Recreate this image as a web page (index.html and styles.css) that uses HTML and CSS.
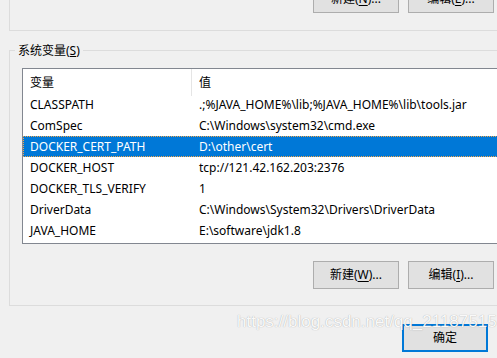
FILE: index.html
```html
<!DOCTYPE html>
<html lang="zh-CN">
<head>
<meta charset="utf-8">
<title>环境变量</title>
<link rel="stylesheet" href="styles.css">
</head>
<body>
<div class="dialog">
  <div class="group-top">
    <div class="btn-row">
      <button class="btn">新建(<u>N</u>)...</button>
      <button class="btn">编辑(<u>E</u>)...</button>
    </div>
  </div>

  <fieldset class="group">
    <legend class="group-label">系统变量(<u>S</u>)</legend>
    <div class="list">
      <div class="list-head">
        <div class="cell">变量</div>
        <div class="cell sep">值</div>
      </div>
      <div class="list-row"><div class="cell">CLASSPATH</div><div class="cell">.;%JAVA_HOME%\lib;%JAVA_HOME%\lib\tools.jar</div></div>
      <div class="list-row"><div class="cell">ComSpec</div><div class="cell">C:\Windows\system32\cmd.exe</div></div>
      <div class="list-row selected"><div class="cell">DOCKER_CERT_PATH</div><div class="cell">D:\other\cert</div></div>
      <div class="list-row"><div class="cell">DOCKER_HOST</div><div class="cell">tcp://121.42.162.203:2376</div></div>
      <div class="list-row"><div class="cell">DOCKER_TLS_VERIFY</div><div class="cell">1</div></div>
      <div class="list-row"><div class="cell">DriverData</div><div class="cell">C:\Windows\System32\Drivers\DriverData</div></div>
      <div class="list-row"><div class="cell">JAVA_HOME</div><div class="cell">E:\software\jdk1.8</div></div>
    </div>
    <div class="btn-row btn-row-bottom">
      <button class="btn">新建(<u>W</u>)...</button>
      <button class="btn">编辑(<u>I</u>)...</button>
    </div>
  </fieldset>

  <div class="footer">
    <button class="btn btn-default">确定</button>
  </div>

  <div class="watermark">https://blog.csdn.net/qq_21187515</div>
</div>
</body>
</html>
```
FILE: styles.css
```css
html, body {
  margin: 0;
  padding: 0;
  width: 497px;
  height: 358px;
  overflow: hidden;
  background: #f0f0f0;
}

.dialog {
  position: relative;
  width: 540px;
  height: 358px;
  font-family: "Noto Sans", "Noto Sans CJK SC", sans-serif;
  font-size: 12px;
  color: #000;
}

.group-top {
  margin: -15px 0 0 9px;
  border-left: 1px solid #dcdcdc;
  border-bottom: 1px solid #dcdcdc;
  padding-bottom: 17px;
}

.btn-row {
  display: flex;
  gap: 9px;
  padding-left: 303px;
}

.btn {
  box-sizing: border-box;
  width: 86px;
  height: 28px;
  margin: 0;
  padding: 0;
  background: #e1e1e1;
  border: 1px solid #adadad;
  border-radius: 0;
  font-family: "Noto Sans", "Noto Sans CJK SC", sans-serif;
  font-size: 12px;
  line-height: 26px;
  color: #000;
}

.btn u {
  text-decoration-thickness: 1px;
  text-underline-offset: 2px;
}

.group {
  margin: 10px 0 0 9px;
  padding: 0 0 16px 0;
  border: 1px solid #dcdcdc;
  min-width: 0;
}

.group-label {
  margin-left: 5px;
  padding: 2px 3px 0;
  line-height: 16px;
  font-size: 12px;
}

.list {
  margin: 9px 0 0 12px;
  border: 1px solid #828790;
  background: #fff;
  padding-bottom: 2px;
}

.list-head,
.list-row {
  display: grid;
  grid-template-columns: 168px 1fr;
}

.list-head {
  height: 25px;
  line-height: 27px;
}

.list-row {
  height: 21px;
  line-height: 21px;
  box-sizing: border-box;
}

.cell {
  padding-left: 7px;
  white-space: nowrap;
}

.sep {
  border-left: 1px solid #e5e5e5;
}

.list-row .cell:nth-child(2) {
  margin-left: 1px;
}

.selected {
  background: #0078d7;
  color: #fff;
  outline: 1px dotted #f3a64a;
  outline-offset: -1px;
}

.btn-row-bottom {
  margin-top: 17px;
}

.footer {
  padding: 18px 0 0 402px;
}

.btn-default {
  border: 2px solid #0078d7;
  line-height: 24px;
}

.watermark {
  position: absolute;
  left: 237px;
  top: 327px;
  font-family: "Liberation Sans", Arial, sans-serif;
  font-size: 17px;
  line-height: 20px;
  color: rgba(255, 255, 255, 0.95);
  text-shadow: 0 0 1px rgba(0, 0, 0, 0.35);
  white-space: nowrap;
}
```
